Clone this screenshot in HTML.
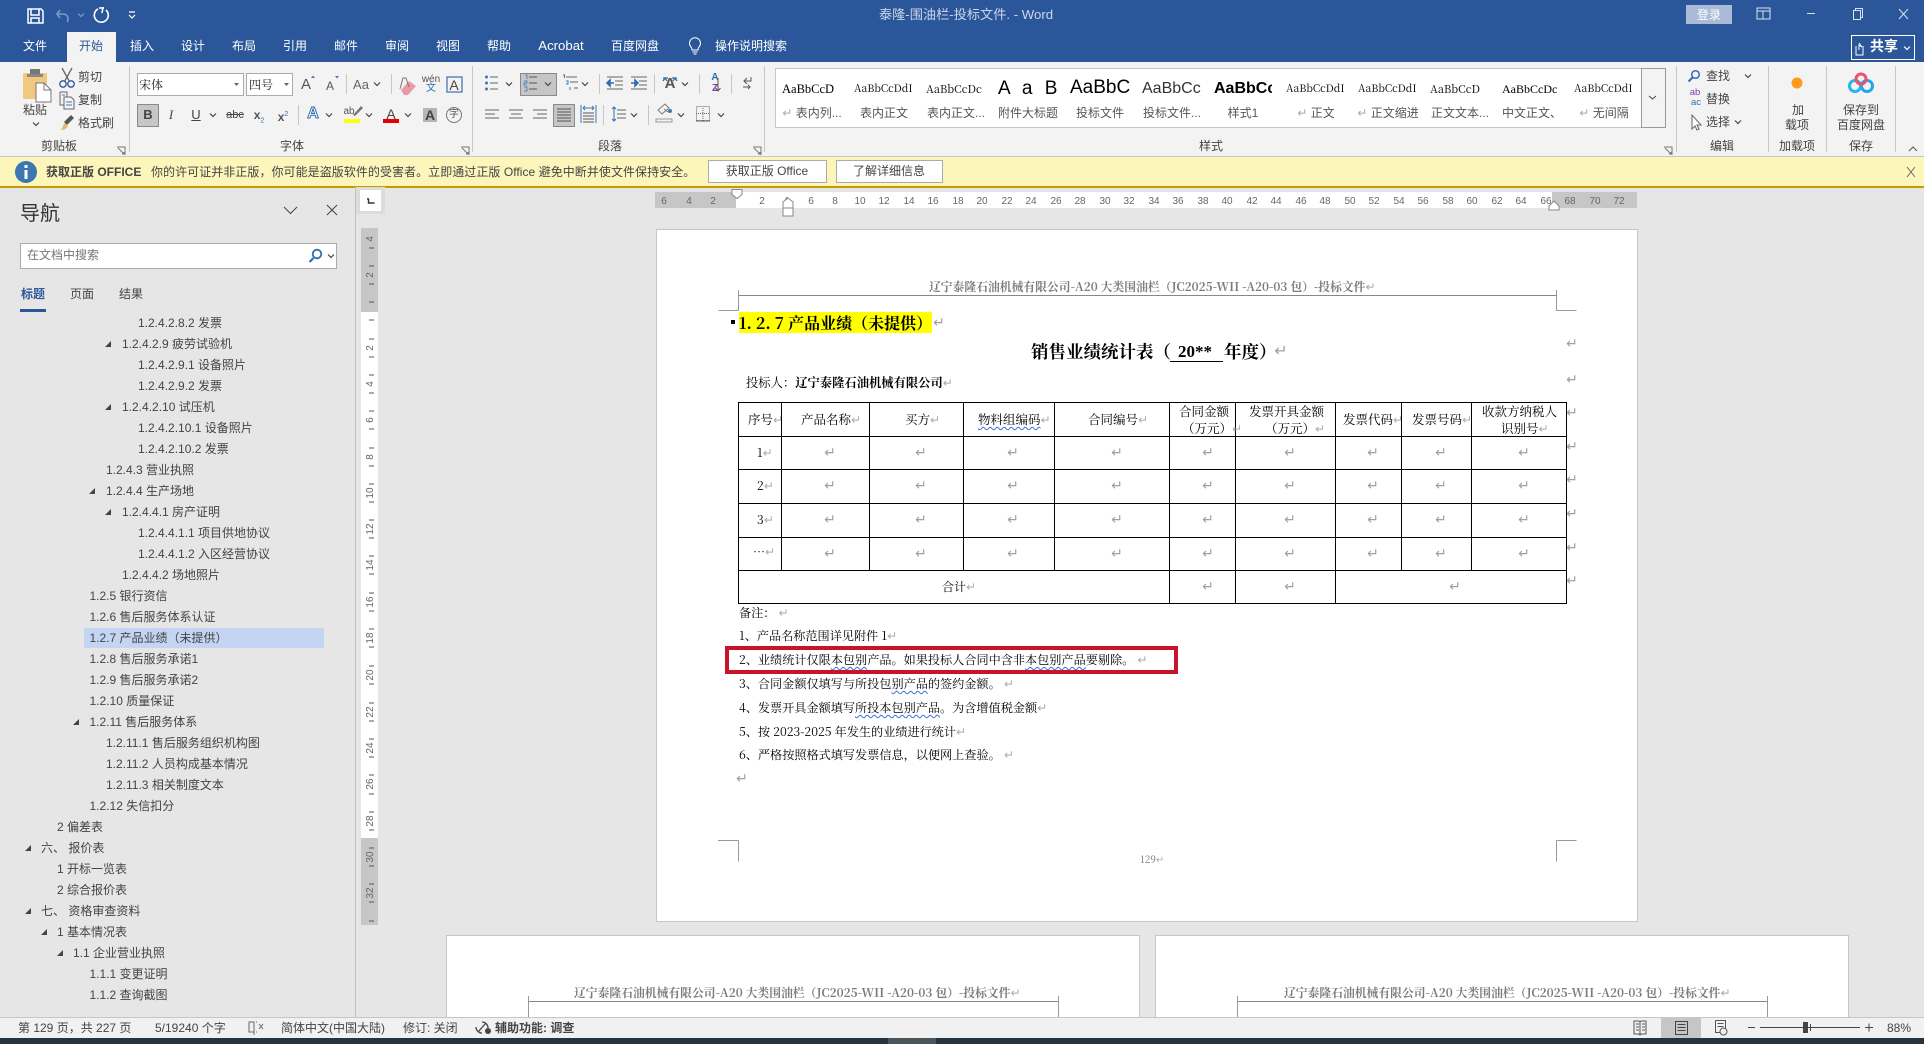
<!DOCTYPE html>
<html lang="zh-CN"><head><meta charset="utf-8"><title>Word</title>
<style>
html,body{margin:0;padding:0;width:1924px;height:1044px;overflow:hidden;background:#E6E6E6}
body{position:relative;font-family:"Liberation Sans","Noto Sans CJK SC",sans-serif;font-size:12px;color:#444}
.b{position:absolute}
.t{position:absolute;white-space:nowrap;line-height:16px;height:16px}
.c{transform:translateX(-50%)}
.w{color:#fff}
.d{font-family:"Noto Serif CJK SC","Liberation Serif",serif;color:#000}
.h{font-family:"Noto Serif CJK SC","Liberation Serif",serif;color:#7b7b7b;font-weight:700}
.r{font-family:"DejaVu Sans",sans-serif;font-weight:400;color:#aaa;font-size:12px;font-style:normal}
.m{position:absolute;line-height:16px;height:16px;font-family:"DejaVu Sans",sans-serif;color:#a0a0a0;font-size:14px;transform:translateX(-50%)}
.u{text-decoration:underline wavy #3a6fd8 1px;text-underline-offset:2px}
.n{position:absolute;white-space:nowrap;line-height:16px;height:16px;color:#444}
.s{position:absolute;overflow:hidden;white-space:nowrap;color:#000;text-align:left}
.g{position:absolute;white-space:nowrap;line-height:16px;height:16px;color:#555;transform:translateX(-50%)}
svg text{font-family:"Liberation Sans",sans-serif}
</style></head>
<body>
<!-- backgrounds -->
<div class="b" style="left:0;top:0;width:1924px;height:62px;background:#2B579A"></div>
<div class="b" style="left:67px;top:32px;width:49px;height:30px;background:#F3F3F3"></div>
<div class="b" style="left:0;top:62px;width:1924px;height:94px;background:#F3F3F3"></div>
<div class="b" style="left:0;top:156px;width:1924px;height:1px;background:#C6C6C6"></div>
<div class="b" style="left:0;top:157px;width:1924px;height:29px;background:#FDF6BA;border-bottom:2px solid #C79A00"></div>
<div class="b" style="left:1686px;top:5px;width:46px;height:19px;background:#A9BBD6"></div>
<div class="b" style="left:1851px;top:35px;width:62px;height:23px;border:1px solid #fff"></div>
<div class="b" style="left:137px;top:73px;width:105px;height:21px;background:#fff;border:1px solid #ABABAB"></div>
<div class="b" style="left:246px;top:73px;width:45px;height:21px;background:#fff;border:1px solid #ABABAB"></div>
<div class="b" style="left:137px;top:104px;width:20px;height:21px;background:#C6C6C6;border:1px solid #8a8a8a"></div>
<div class="b" style="left:520px;top:73px;width:35px;height:21px;background:#C6C6C6;border:1px solid #8a8a8a"></div>
<div class="b" style="left:553px;top:104px;width:20px;height:21px;background:#C6C6C6;border:1px solid #8a8a8a"></div>
<div class="b" style="left:775px;top:68px;width:866px;height:58px;background:#fff;border:1px solid #C6C6C6;border-right:0"></div>
<div class="b" style="left:1641px;top:68px;width:23px;height:58px;background:#F3F3F3;border:1px solid #9a9a9a"></div>
<div class="b" style="left:708px;top:160px;width:117px;height:21px;background:#fff;border:1px solid #ABABAB"></div>
<div class="b" style="left:836px;top:160px;width:105px;height:21px;background:#fff;border:1px solid #ABABAB"></div>
<div class="b" style="left:355px;top:187px;width:1px;height:830px;background:#BFBFBF"></div>
<div class="b" style="left:356px;top:187px;width:29px;height:27px;background:#DCDCDC"></div>
<div class="b" style="left:360px;top:190px;width:21px;height:21px;background:#fff"></div>
<div class="b" style="left:361px;top:228px;width:17px;height:84px;background:#C6C6C6"></div>
<div class="b" style="left:361px;top:312px;width:17px;height:526px;background:#fff"></div>
<div class="b" style="left:361px;top:838px;width:17px;height:87px;background:#C6C6C6"></div>
<div class="b" style="left:655px;top:192px;width:81px;height:16px;background:#C6C6C6"></div>
<div class="b" style="left:736px;top:192px;width:816px;height:16px;background:#fff"></div>
<div class="b" style="left:1552px;top:192px;width:85px;height:16px;background:#C6C6C6"></div>
<div class="b" style="left:656px;top:229px;width:982px;height:693px;background:#fff;border:1px solid #C6C6C6;box-sizing:border-box"></div>
<div class="b" style="left:446px;top:935px;width:694px;height:90px;background:#fff;border:1px solid #C6C6C6;box-sizing:border-box"></div>
<div class="b" style="left:1155px;top:935px;width:694px;height:90px;background:#fff;border:1px solid #C6C6C6;box-sizing:border-box"></div>
<div class="b" style="left:20px;top:243px;width:315px;height:24px;background:#fff;border:1px solid #ABABAB"></div>
<div class="b" style="left:20px;top:309px;width:26px;height:3px;background:#2B579A"></div>
<div class="b" style="left:84px;top:628px;width:240px;height:20px;background:#C3D5F2"></div>
<div class="b" style="left:0;top:1017px;width:1924px;height:21px;background:#F1F1F1;border-top:1px solid #C6C6C6;box-sizing:border-box"></div>
<div class="b" style="left:1661px;top:1017px;width:40px;height:21px;background:#C6C6C6"></div>
<div class="b" style="left:0;top:1038px;width:1924px;height:6px;background:#25343E"></div>
<div class="b" style="left:888px;top:1038px;width:48px;height:6px;background:#4A555C"></div>
<div class="b" style="left:739px;top:312px;width:193px;height:21px;background:#FFFF00"></div>

<!-- graphics -->
<svg class="b" style="left:0;top:0" width="1924" height="1044" viewBox="0 0 1924 1044" fill="none">
<defs>
<path id="cv" d="M-3-1.5L0 1.5L3-1.5" stroke="#444" stroke-width="1.2"/>
<path id="ar" d="M6-3V3H0Z" fill="#444"/>
<path id="aln" d="M0 0h14M0 4h10M0 8h14" stroke="#666" stroke-width="1"/>
</defs>
<!-- QAT -->
<path d="M28 9h13l2 2v12H28zM31 9v6h8V9M31 23v-5h8v5" stroke="#fff" stroke-width="1.5"/>
<path d="M60 10l-3 4 3 4M57 14h7a5 5 0 0 1 3 8" stroke="#7D9AC6" stroke-width="1.6"/>
<path d="M78 13.500l3 3 3-3" stroke="#7D9AC6" stroke-width="1.2"/>
<path d="M98 9a7 7 0 1 0 8 1M103 7l-1 6M99 8h5" stroke="#fff" stroke-width="1.6"/>
<path d="M129 12h6M129 15l3 3 3-3" stroke="#fff" stroke-width="1.2"/>
<!-- window -->
<path d="M1757 8h13v11h-13zM1757 11h13M1763 11v8" stroke="#D8E1EE" stroke-width="1"/>
<path d="M1807 13.500h8" stroke="#D8E1EE"/>
<path d="M1853.500 10.500h7v9h-7zM1855.500 10.500v-2h7v9h-2" stroke="#D8E1EE"/>
<path d="M1899 9l9 10M1908 9l-9 10" stroke="#D8E1EE"/>
<!-- lightbulb -->
<path d="M691 47a5.500 5.500 0 1 1 8 0c-1 1-1 2-1 3h-6c0-1 0-2-1-3zM692.500 52h5M693.500 54h3" stroke="#fff" stroke-width="1"/>
<!-- share -->
<path d="M1856 46v9h7v-9M1859 50v-5l3 2-3-4" stroke="#fff"/>
<path d="M1904 46.500l3 3 3-3" stroke="#fff" stroke-width="1.2"/>
<!-- separators -->
<path d="M129.500 66v86M472.500 66v86M764.500 66v86M1676.500 66v86M1768.500 66v86M1826.500 66v86M1895.500 66v86" stroke="#C6C6C6"/>
<path d="M346.500 74v20M391.500 74v20M298.500 105v20M599.500 74v20M654.500 74v20M699.500 74v20M731.500 74v20M603.500 105v20M648.500 105v20" stroke="#C6C6C6"/>
<!-- dialog launchers -->
<path d="M117 147h8v8M118 148l6 6M122 154h2v-2" stroke="#777"/>
<path d="M461 147h8v8M462 148l6 6M466 154h2v-2" stroke="#777"/>
<path d="M753 147h8v8M754 148l6 6M758 154h2v-2" stroke="#777"/>
<path d="M1664 147h8v8M1665 148l6 6M1669 154h2v-2" stroke="#777"/>
<path d="M1909 151l4-4 4 4" stroke="#555"/>
<!-- paste -->
<rect x="23" y="73" width="24" height="26" rx="1" fill="#F0C87E"/>
<rect x="30" y="69" width="10" height="7" fill="#777"/><rect x="27" y="74" width="16" height="3" fill="#888"/>
<path d="M36 83h8l7 7v12H36z" fill="#fff" stroke="#777"/><path d="M44 83v7h7" stroke="#777"/>
<use href="#cv" x="36" y="124"/>
<!-- scissors -->
<circle cx="63" cy="84" r="3.200" stroke="#2B579A" stroke-width="1.300"/><circle cx="71" cy="84" r="3.200" stroke="#2B579A" stroke-width="1.300"/>
<path d="M64.500 81.500L72 68M69.500 81.500L62 68" stroke="#666" stroke-width="1.300"/>
<!-- copy -->
<path d="M60 92h7v5M60 92v13h4M64 97h7l3 3v9h-10z" stroke="#667" stroke-width="1"/><path d="M66 102h6M66 105h6M62 95h3" stroke="#4A78B5"/>
<!-- painter -->
<path d="M64 122l7-7 3 3-7 7z" fill="#555"/><path d="M60 130c3-1 3-6 5-7l3 3c-1 3-5 4-8 4z" fill="#E8B86A"/>
<path d="M234 83l2.500 3 2.500-3zM284 83l2.500 3 2.500-3z" fill="#666"/>
<!-- font shrink/grow arrows -->
<path d="M311 78l2-2.500 2 2.500zM335 76l2 2.500 2-2.500z" fill="#4A78B5"/>
<use href="#cv" x="377" y="84"/>
<!-- eraser -->
<path d="M401 90l8-9 7 5-8 9h-4z" fill="#E99AA6"/><path d="M400 89l3-11h3l3 9" stroke="#777"/>
<rect x="447" y="77" width="15" height="15" stroke="#4A78B5" stroke-width="1.300"/>
<!-- font row 2 -->
<use href="#cv" x="213" y="115"/><use href="#cv" x="329" y="115"/><use href="#cv" x="369" y="115"/><use href="#cv" x="408" y="115"/>
<rect x="344" y="119" width="16" height="4" fill="#FFFF00"/><rect x="383" y="119" width="16" height="4" fill="#E60000"/>
<path d="M353 115l8-9 2 2-8 8z" fill="#777"/>
<rect x="423" y="108" width="14" height="14" fill="#B5B5B5"/>
<circle cx="454" cy="115" r="7.500" stroke="#777"/>
<!-- bullets -->
<g fill="#3C78B5"><circle cx="486.500" cy="77" r="1.500"/><circle cx="486.500" cy="83" r="1.500"/><circle cx="486.500" cy="89" r="1.500"/></g>
<path d="M490 77h8M490 83h8M490 89h8" stroke="#666"/><use href="#cv" x="509" y="84"/>
<path d="M529 77h8M529 83h8M529 89h8" stroke="#555"/><use href="#cv" x="548" y="84"/>
<path d="M525 75h2v4M524 81h3v2h-3v2h3M524 87h3v4h-3" stroke="#3C78B5" stroke-width=".8"/>
<path d="M563 75h1.500v3M566 77h11M570 82h8M574 88h4" stroke="#666"/><path d="M566 81h2v3h-2M570 87v3" stroke="#3C78B5"/><use href="#cv" x="585" y="84"/>
<!-- indent -->
<path d="M607 77h16M615 81h8M615 85h8M607 89h16M631 77h16M639 81h8M639 85h8M631 89h16" stroke="#666"/>
<path d="M614 83h-7M607 83l3-3v6zM631 83h7M638 83l-3-3v6z" stroke="#2F6FB0" stroke-width="1.600" fill="#2F6FB0"/>
<!-- text direction -->
<path d="M663 81l2-3 2 3M663 78h5M677 81l-2-3-2 3M677 78h-5" stroke="#2F6FB0" stroke-width="1.300"/>
<use href="#cv" x="685" y="84"/>
<path d="M718 78v13M715.500 88l2.500 3 2.500-3" stroke="#555"/>
<path d="M751 77v4h-7M747 78l-3 3 3 3M743 87h7M748 85l2 2-2 2" stroke="#555"/>
<!-- align -->
<use href="#aln" x="485" y="110"/><path d="M509 110h14M511 114h10M509 118h14M533 110h14M537 114h10M533 118h14" stroke="#666"/>
<path d="M557 109h14M557 112h14M557 115h14M557 118h14M557 121h14" stroke="#555"/>
<path d="M581 105v18M596 105v18" stroke="#3C78B5"/><path d="M583 108h11M583 108l2-2M583 108l2 2M594 108l-2-2M594 108l-2 2" stroke="#3C78B5"/><path d="M583 113h11M583 116h11M583 119h11M583 122h11" stroke="#555"/>
<path d="M617 110h9M617 114h9M617 118h9" stroke="#666"/><path d="M614 107v14M612 109l2-2 2 2M612 119l2 2 2-2" stroke="#2F6FB0"/>
<use href="#cv" x="634" y="115"/>
<path d="M658 110l7-6 4 4-7 6zM664 109l4 3" stroke="#777"/><rect x="656" y="119" width="16" height="3" stroke="#999"/><circle cx="670" cy="111" r="2" fill="#3C78B5"/>
<use href="#cv" x="681" y="115"/>
<path d="M696.500 106.500h13v14h-13zM703 106v15M696 113.500h14" stroke="#666" stroke-dasharray="1 1"/><path d="M696 121h14" stroke="#666"/>
<use href="#cv" x="721" y="115"/>
<path d="M1649 96l3.500 3 3.500-3" stroke="#444"/>
<!-- edit -->
<circle cx="1695.500" cy="74.500" r="3.800" stroke="#2F6FB0" stroke-width="1.500"/><path d="M1692.500 77.500l-4 4" stroke="#2F6FB0" stroke-width="2"/>
<use href="#cv" x="1748" y="76"/><use href="#cv" x="1738" y="122"/>
<path d="M1692 115v14l3-3 2 4 2-1-2-4h4z" stroke="#666" fill="#fff"/>
<circle cx="1797" cy="83" r="5.500" fill="#FF9A1F"/>
<!-- baidu -->
<circle cx="1855" cy="86" r="5.500" stroke="#23B7EA" stroke-width="3"/>
<circle cx="1867" cy="86" r="5.500" stroke="#23A7E8" stroke-width="3"/>
<circle cx="1861" cy="79" r="5" stroke="#F0506E" stroke-width="3"/>
<!-- info -->
<circle cx="26" cy="172" r="11" fill="#3C78AF"/><rect x="24.500" y="170" width="3" height="9" fill="#fff"/><rect x="24.500" y="165" width="3" height="3" fill="#fff"/>
<path d="M1907 167l8 10M1915 167l-8 10" stroke="#666"/>
<!-- nav -->
<path d="M284 207l6.500 6.500 6.500-6.500M327 205l10 10M337 205l-10 10" stroke="#444"/>
<circle cx="317" cy="254" r="4.300" stroke="#2F6FB0" stroke-width="1.800"/><path d="M313.500 258l-4 4" stroke="#2F6FB0" stroke-width="2.200"/><use href="#cv" x="331" y="256"/>
<use href="#ar" x="105" y="344"/><use href="#ar" x="105" y="407"/><use href="#ar" x="89" y="491"/><use href="#ar" x="105" y="512"/><use href="#ar" x="73" y="722"/><use href="#ar" x="25" y="848"/><use href="#ar" x="25" y="911"/><use href="#ar" x="41" y="932"/><use href="#ar" x="57" y="953"/>
<!-- v ruler -->
<path d="M367 199h1.500v4h6" stroke="#333" stroke-width="1.400"/>
<path d="M369 248h5M369 266h5M369 284h5M369 302h5M369 320h5M369 339h5M369 357h5M369 375h5M369 393h5M369 411h5M369 429h5M369 448h5M369 466h5M369 484h5M369 502h5M369 520h5M369 538h5M369 556h5M369 574h5M369 593h5M369 611h5M369 629h5M369 647h5M369 666h5M369 684h5M369 703h5M369 721h5M369 739h5M369 757h5M369 775h5M369 794h5M369 812h5M369 830h5M369 848h5M369 866h5M369 884h5M369 902h5M369 921h5" stroke="#555"/>
<g fill="#666" font-size="10" text-anchor="middle">
<text transform="translate(373,239) rotate(-90)">4</text><text transform="translate(373,275) rotate(-90)">2</text><text transform="translate(373,348) rotate(-90)">2</text><text transform="translate(373,384) rotate(-90)">4</text><text transform="translate(373,420) rotate(-90)">6</text><text transform="translate(373,457) rotate(-90)">8</text><text transform="translate(373,493) rotate(-90)">10</text><text transform="translate(373,529) rotate(-90)">12</text><text transform="translate(373,565) rotate(-90)">14</text><text transform="translate(373,602) rotate(-90)">16</text><text transform="translate(373,638) rotate(-90)">18</text><text transform="translate(373,675) rotate(-90)">20</text><text transform="translate(373,712) rotate(-90)">22</text><text transform="translate(373,748) rotate(-90)">24</text><text transform="translate(373,784) rotate(-90)">26</text><text transform="translate(373,821) rotate(-90)">28</text><text transform="translate(373,857) rotate(-90)">30</text><text transform="translate(373,893) rotate(-90)">32</text>
<!-- h ruler -->
<text x="664" y="204">6</text><text x="689" y="204">4</text><text x="713" y="204">2</text><text x="762" y="204">2</text><text x="786" y="204">4</text><text x="811" y="204">6</text><text x="835" y="204">8</text><text x="860" y="204">10</text><text x="884" y="204">12</text><text x="909" y="204">14</text><text x="933" y="204">16</text><text x="958" y="204">18</text><text x="982" y="204">20</text><text x="1007" y="204">22</text><text x="1031" y="204">24</text><text x="1056" y="204">26</text><text x="1080" y="204">28</text><text x="1105" y="204">30</text><text x="1129" y="204">32</text><text x="1154" y="204">34</text><text x="1178" y="204">36</text><text x="1203" y="204">38</text><text x="1227" y="204">40</text><text x="1252" y="204">42</text><text x="1276" y="204">44</text><text x="1301" y="204">46</text><text x="1325" y="204">48</text><text x="1350" y="204">50</text><text x="1374" y="204">52</text><text x="1399" y="204">54</text><text x="1423" y="204">56</text><text x="1448" y="204">58</text><text x="1472" y="204">60</text><text x="1497" y="204">62</text><text x="1521" y="204">64</text><text x="1546" y="204">66</text><text x="1570" y="204">68</text><text x="1595" y="204">70</text><text x="1619" y="204">72</text>
</g>
<path d="M732 189.500h10v5l-5 4-5-4z" fill="#fff" stroke="#888"/>
<path d="M783 202l5-4 5 4v14h-10zM783 208h10" fill="#fff" stroke="#888"/>
<path d="M1549 210v-4l5-5 5 5v4z" fill="#fff" stroke="#888"/>
<!-- page crop marks & header lines -->
<path d="M738.500 290v20.500h-20M1556.500 290v20.500h20M738.500 840.500v21M718 840.500h20.500M1556.500 840.500v21M1556.500 840.500h20" stroke="#999"/>
<path d="M738 295.500h819M528 1001.500h531M1237 1001.500h531" stroke="#888"/>
<path d="M1058.500 996v21M1767.500 996v21M528.500 996v21M1237.500 996v21" stroke="#999"/>
<rect x="731" y="320" width="4" height="4" fill="#000"/>
<!-- table -->
<path d="M738.500 402.500H1566.500M738.500 436.500H1566.500M738.500 469.500H1566.500M738.500 503.500H1566.500M738.500 537.500H1566.500M738.500 570.500H1566.500M738.500 603.500H1566.500M738.500 402V604M1566.500 402V604M781.500 402V571M869.500 402V571M963.500 402V571M1054.500 402V571M1401.500 402V571M1471.500 402V571M1169.500 402V604M1235.500 402V604M1335.500 402V604" stroke="#000" stroke-width="1"/>
<path d="M1170 361.500h53" stroke="#000"/>
<!-- red box -->
<rect x="727" y="648" width="449" height="24" stroke="#C8142A" stroke-width="4"/>
<!-- status bar -->
<path d="M249 1022h5v10h-5zM254 1022v13M256 1022h1M256 1032h1M259 1024l4 5M263 1024l-4 5" stroke="#666"/>
<path d="M478 1032l8-9M482 1022a6 6 0 0 1 6 6M476 1027a6 6 0 0 0 6 6" stroke="#444" stroke-width="1.300"/><circle cx="488" cy="1031" r="3" fill="#444"/>
<path d="M1634 1021h5l1 1 1-1h5v13h-5l-1 1-1-1h-5zM1640 1022v12M1636 1024h3M1636 1027h3M1636 1030h3M1642 1024h3M1642 1027h3M1642 1030h3" stroke="#555"/>
<path d="M1675.500 1021.500h12v13h-12zM1677.500 1024.500h8M1677.500 1027.500h8M1677.500 1030.500h8" stroke="#444"/>
<path d="M1715.500 1020.500h10v8M1715.500 1020.500v12h5M1717.500 1023.500h6M1717.500 1026.500h6" stroke="#555"/><circle cx="1723.500" cy="1031.500" r="3.500" stroke="#555"/>
<path d="M1748 1027.500h7M1760 1027.500h100M1865 1027.500h8M1869 1023.500v8M1810.500 1024v7" stroke="#444"/>
<rect x="1803" y="1022" width="5" height="11" fill="#444"/>
</svg>

<!-- title bar -->
<div class="t c" style="left:966px;top:7px;font-size:13.200px;color:#CBD6E8">泰隆-围油栏-投标文件. - Word</div>
<div class="t c w" style="left:1709px;top:7px">登录</div>
<!-- tabs -->
<div class="t c w" style="left:35px;top:38px">文件</div>
<div class="t c" style="left:91px;top:38px;color:#2B579A">开始</div>
<div class="t c w" style="left:142px;top:38px">插入</div>
<div class="t c w" style="left:193px;top:38px">设计</div>
<div class="t c w" style="left:244px;top:38px">布局</div>
<div class="t c w" style="left:295px;top:38px">引用</div>
<div class="t c w" style="left:346px;top:38px">邮件</div>
<div class="t c w" style="left:397px;top:38px">审阅</div>
<div class="t c w" style="left:448px;top:38px">视图</div>
<div class="t c w" style="left:499px;top:38px">帮助</div>
<div class="t c w" style="left:561px;top:38px;font-size:13.200px">Acrobat</div>
<div class="t c w" style="left:635px;top:38px">百度网盘</div>
<div class="t c w" style="left:751px;top:38px">操作说明搜索</div>
<div class="t c w" style="left:1884px;top:38px;font-size:14px;font-weight:700">共享</div>

<!-- clipboard -->
<div class="t c" style="left:35px;top:102px">粘贴</div>
<div class="t" style="left:78px;top:69px">剪切</div>
<div class="t" style="left:78px;top:92px">复制</div>
<div class="t" style="left:78px;top:115px">格式刷</div>
<div class="t c" style="left:59px;top:138px">剪贴板</div>
<!-- font -->
<div class="t" style="left:139px;top:77px;color:#222;font-size:12px;font-family:'Noto Serif CJK SC',serif">宋体</div>
<div class="t" style="left:249px;top:77px;color:#222;font-size:12px;font-family:'Noto Serif CJK SC',serif">四号</div>
<div class="t c" style="left:306px;top:77px;font-size:15px;color:#555">A</div>
<div class="t c" style="left:330px;top:78px;font-size:12px;color:#555">A</div>
<div class="t c" style="left:361px;top:77px;font-size:13px;color:#666">Aa</div>
<div class="t c" style="left:431px;top:72px;font-size:10px;color:#555">wén</div>
<div class="t c" style="left:431px;top:81px;font-size:10px;color:#2F6FB0">文</div>
<div class="t c" style="left:454px;top:77px;font-size:14px;color:#444">A</div>
<div class="t c" style="left:148px;top:107px;font-size:13px;font-weight:700;color:#444">B</div>
<div class="t c" style="left:171px;top:107px;font-size:13px;font-style:italic;font-family:'Liberation Serif',serif;color:#444">I</div>
<div class="t c" style="left:196px;top:107px;font-size:13px;text-decoration:underline;color:#444">U</div>
<div class="t c" style="left:235px;top:107px;font-size:11px;text-decoration:line-through;color:#444">abc</div>
<div class="t c" style="left:259px;top:107px;font-size:12px;font-weight:700;color:#555">x<sub style="font-size:7px;color:#2F6FB0;font-weight:400">2</sub></div>
<div class="t c" style="left:283px;top:107px;font-size:12px;font-weight:700;color:#555">x<sup style="font-size:7px;color:#2F6FB0;font-weight:400">2</sup></div>
<div class="t c" style="left:313px;top:106px;font-size:16px;font-weight:700;color:#fff;-webkit-text-stroke:1px #2F6FB0">A</div>
<div class="t c" style="left:349px;top:104px;font-size:10px;color:#555">ab</div>
<div class="t c" style="left:391px;top:106px;font-size:14px;color:#444">A</div>
<div class="t c" style="left:430px;top:107px;font-size:14px;font-weight:700;color:#444">A</div>
<div class="t c" style="left:454px;top:107px;font-size:10px;color:#555">字</div>
<div class="t c" style="left:292px;top:138px">字体</div>
<div class="t c" style="left:610px;top:138px">段落</div>
<div class="t c" style="left:1211px;top:138px">样式</div>
<div class="t c" style="left:1722px;top:138px">编辑</div>
<div class="t c" style="left:1797px;top:138px">加载项</div>
<div class="t c" style="left:1861px;top:138px">保存</div>
<div class="t c" style="left:670px;top:76px;font-size:15px;font-weight:700;color:#555">A</div>
<div class="t c" style="left:715px;top:70px;font-size:10px;font-weight:700;color:#2F6FB0">A</div>
<div class="t c" style="left:715px;top:81px;font-size:10px;font-weight:700;color:#7B3FA5">Z</div>

<!-- styles -->
<div class="s" style="left:782px;top:80px;width:60px;font-size:12.500px;line-height:18px;font-family:'Liberation Serif',serif">AaBbCcD</div>
<div class="s" style="left:854px;top:80px;width:60px;font-size:10.500px;line-height:18px;font-family:'Noto Serif CJK SC',serif">AaBbCcDdI</div>
<div class="s" style="left:926px;top:80px;width:60px;font-size:11px;line-height:18px;font-family:'Noto Serif CJK SC',serif">AaBbCcDc</div>
<div class="s" style="left:998px;top:78px;width:60px;font-size:19px;line-height:22px;letter-spacing:3.500px">A a B</div>
<div class="s" style="left:1070px;top:76px;width:60px;font-size:19px;line-height:24px">AaBbC</div>
<div class="s" style="left:1142px;top:78px;width:60px;font-size:16px;line-height:22px;color:#333">AaBbCc</div>
<div class="s" style="left:1214px;top:78px;width:58px;font-size:16px;line-height:22px;font-weight:700">AaBbCc</div>
<div class="s" style="left:1286px;top:80px;width:60px;font-size:10.500px;line-height:18px;font-family:'Noto Serif CJK SC',serif">AaBbCcDdI</div>
<div class="s" style="left:1358px;top:80px;width:60px;font-size:10.500px;line-height:18px;font-family:'Noto Serif CJK SC',serif">AaBbCcDdI</div>
<div class="s" style="left:1430px;top:80px;width:60px;font-size:11px;line-height:18px;font-family:'Noto Serif CJK SC',serif">AaBbCcD</div>
<div class="s" style="left:1502px;top:80px;width:60px;font-size:12px;line-height:18px;font-family:'Liberation Serif',serif">AaBbCcDc</div>
<div class="s" style="left:1574px;top:80px;width:60px;font-size:10.500px;line-height:18px;font-family:'Noto Serif CJK SC',serif">AaBbCcDdI</div>
<div class="g" style="left:812px;top:105px"><i class="r">↵</i> 表内列...</div>
<div class="g" style="left:884px;top:105px">表内正文</div>
<div class="g" style="left:956px;top:105px">表内正文...</div>
<div class="g" style="left:1028px;top:105px">附件大标题</div>
<div class="g" style="left:1100px;top:105px">投标文件</div>
<div class="g" style="left:1172px;top:105px">投标文件...</div>
<div class="g" style="left:1243px;top:105px">样式1</div>
<div class="g" style="left:1316px;top:105px"><i class="r">↵</i> 正文</div>
<div class="g" style="left:1388px;top:105px"><i class="r">↵</i> 正文缩进</div>
<div class="g" style="left:1460px;top:105px">正文文本...</div>
<div class="g" style="left:1532px;top:105px">中文正文、</div>
<div class="g" style="left:1604px;top:105px"><i class="r">↵</i> 无间隔</div>
<!-- edit -->
<div class="t" style="left:1706px;top:68px">查找</div>
<div class="t" style="left:1706px;top:91px">替换</div>
<div class="t" style="left:1706px;top:114px">选择</div>
<div class="t c" style="left:1695px;top:87px;font-size:9.500px;color:#7B3FA5;line-height:12px">ab</div>
<div class="t c" style="left:1696px;top:97px;font-size:9.500px;color:#2F6FB0;line-height:12px">ac</div>
<div class="t c" style="left:1798px;top:102px">加</div>
<div class="t c" style="left:1797px;top:117px">载项</div>
<div class="t c" style="left:1861px;top:102px">保存到</div>
<div class="t c" style="left:1861px;top:117px">百度网盘</div>

<!-- message bar -->
<div class="t" style="left:46px;top:164px;font-weight:700;color:#444">获取正版 OFFICE</div>
<div class="t" style="left:151px;top:164px;letter-spacing:.05px;color:#444">你的许可证并非正版，你可能是盗版软件的受害者。立即通过正版 Office 避免中断并使文件保持安全。</div>
<div class="t c" style="left:767px;top:163px">获取正版 Office</div>
<div class="t c" style="left:889px;top:163px">了解详细信息</div>

<!-- nav -->
<div class="t" style="left:20px;top:202px;height:24px;line-height:24px;font-size:20px;color:#333">导航</div>
<div class="t" style="left:27px;top:247px;color:#777">在文档中搜索</div>
<div class="t" style="left:21px;top:286px;color:#2B579A;font-weight:700">标题</div>
<div class="t" style="left:70px;top:286px">页面</div>
<div class="t" style="left:119px;top:286px">结果</div>
<div class="n" style="left:138px;top:315px">1.2.4.2.8.2 发票</div>
<div class="n" style="left:122px;top:336px">1.2.4.2.9 疲劳试验机</div>
<div class="n" style="left:138px;top:357px">1.2.4.2.9.1 设备照片</div>
<div class="n" style="left:138px;top:378px">1.2.4.2.9.2 发票</div>
<div class="n" style="left:122px;top:399px">1.2.4.2.10 试压机</div>
<div class="n" style="left:138px;top:420px">1.2.4.2.10.1 设备照片</div>
<div class="n" style="left:138px;top:441px">1.2.4.2.10.2 发票</div>
<div class="n" style="left:106px;top:462px">1.2.4.3 营业执照</div>
<div class="n" style="left:106px;top:483px">1.2.4.4 生产场地</div>
<div class="n" style="left:122px;top:504px">1.2.4.4.1 房产证明</div>
<div class="n" style="left:138px;top:525px">1.2.4.4.1.1 项目供地协议</div>
<div class="n" style="left:138px;top:546px">1.2.4.4.1.2 入区经营协议</div>
<div class="n" style="left:122px;top:567px">1.2.4.4.2 场地照片</div>
<div class="n" style="left:89.500px;top:588px">1.2.5 银行资信</div>
<div class="n" style="left:89.500px;top:609px">1.2.6 售后服务体系认证</div>
<div class="n" style="left:89.500px;top:630px">1.2.7 产品业绩（未提供）</div>
<div class="n" style="left:89.500px;top:651px">1.2.8 售后服务承诺1</div>
<div class="n" style="left:89.500px;top:672px">1.2.9 售后服务承诺2</div>
<div class="n" style="left:89.500px;top:693px">1.2.10 质量保证</div>
<div class="n" style="left:89.500px;top:714px">1.2.11 售后服务体系</div>
<div class="n" style="left:106px;top:735px">1.2.11.1 售后服务组织机构图</div>
<div class="n" style="left:106px;top:756px">1.2.11.2 人员构成基本情况</div>
<div class="n" style="left:106px;top:777px">1.2.11.3 相关制度文本</div>
<div class="n" style="left:89.500px;top:798px">1.2.12 失信扣分</div>
<div class="n" style="left:57px;top:819px">2 偏差表</div>
<div class="n" style="left:41px;top:840px">六、 报价表</div>
<div class="n" style="left:57px;top:861px">1 开标一览表</div>
<div class="n" style="left:57px;top:882px">2 综合报价表</div>
<div class="n" style="left:41px;top:903px">七、 资格审查资料</div>
<div class="n" style="left:57px;top:924px">1 基本情况表</div>
<div class="n" style="left:73px;top:945px">1.1 企业营业执照</div>
<div class="n" style="left:89.500px;top:966px">1.1.1 变更证明</div>
<div class="n" style="left:89.500px;top:987px">1.1.2 查询截图</div>

<!-- document -->
<div class="t h" style="left:929px;top:279px;font-size:11.800px">辽宁泰隆石油机械有限公司-A20 大类围油栏（JC2025-WII -A20-03 包）-投标文件<i class="r">↵</i></div>
<div class="t d" style="left:739px;top:315px;font-size:16px;font-weight:700">1. 2. 7 产品业绩（未提供）</div>
<div class="m" style="left:939px;top:315px">↵</div>
<div class="t d" style="left:1031px;top:343px;height:18px;line-height:18px;font-size:17.500px;font-weight:700">销售业绩统计表（</div>
<div class="t d" style="left:1178px;top:343px;height:18px;line-height:18px;font-size:17px;font-weight:700;font-family:'Liberation Serif',serif">20**</div>
<div class="t d" style="left:1224px;top:343px;height:18px;line-height:18px;font-size:17.500px;font-weight:700">年度）</div>
<div class="m" style="left:1281px;top:343px;font-size:16px">↵</div>
<div class="t d" style="left:746px;top:374px;font-size:12.300px">投标人：<b>辽宁泰隆石油机械有限公司</b><i class="r">↵</i></div>

<div class="t d" style="left:748px;top:411px;font-size:12.500px">序号<i class="r">↵</i></div>
<div class="t d" style="left:801px;top:411px;font-size:12.500px">产品名称<i class="r">↵</i></div>
<div class="t d" style="left:905px;top:411px;font-size:12.500px">买方<i class="r">↵</i></div>
<div class="t d" style="left:978px;top:411px;font-size:12.500px"><span class="u">物料组编码</span><i class="r">↵</i></div>
<div class="t d" style="left:1088px;top:411px;font-size:12.500px">合同编号<i class="r">↵</i></div>
<div class="t d" style="left:1179px;top:403px;font-size:12.500px">合同金额</div>
<div class="t d" style="left:1182px;top:420px;font-size:12.500px">（万元）<i class="r">↵</i></div>
<div class="t d" style="left:1249px;top:403px;font-size:12.500px">发票开具金额</div>
<div class="t d" style="left:1265px;top:420px;font-size:12.500px">（万元）<i class="r">↵</i></div>
<div class="t d" style="left:1343px;top:411px;font-size:12.500px">发票代码<i class="r">↵</i></div>
<div class="t d" style="left:1412px;top:411px;font-size:12.500px">发票号码<i class="r">↵</i></div>
<div class="t d" style="left:1482px;top:403px;font-size:12.500px">收款方纳税人</div>
<div class="t d" style="left:1501px;top:420px;font-size:12.500px">识别号<i class="r">↵</i></div>

<div class="t d" style="left:757px;top:445px">1<i class="r">↵</i></div>
<div class="t d" style="left:757px;top:478px">2<i class="r">↵</i></div>
<div class="t d" style="left:757px;top:512px">3<i class="r">↵</i></div>
<div class="t d" style="left:753px;top:544px">…<i class="r">↵</i></div>
<div class="t d" style="left:942px;top:579px">合计<i class="r">↵</i></div>

<div class="m" style="left:830px;top:445px">↵</div><div class="m" style="left:921px;top:445px">↵</div><div class="m" style="left:1013px;top:445px">↵</div><div class="m" style="left:1117px;top:445px">↵</div><div class="m" style="left:1208px;top:445px">↵</div><div class="m" style="left:1290px;top:445px">↵</div><div class="m" style="left:1373px;top:445px">↵</div><div class="m" style="left:1441px;top:445px">↵</div><div class="m" style="left:1524px;top:445px">↵</div>
<div class="m" style="left:830px;top:478px">↵</div><div class="m" style="left:921px;top:478px">↵</div><div class="m" style="left:1013px;top:478px">↵</div><div class="m" style="left:1117px;top:478px">↵</div><div class="m" style="left:1208px;top:478px">↵</div><div class="m" style="left:1290px;top:478px">↵</div><div class="m" style="left:1373px;top:478px">↵</div><div class="m" style="left:1441px;top:478px">↵</div><div class="m" style="left:1524px;top:478px">↵</div>
<div class="m" style="left:830px;top:512px">↵</div><div class="m" style="left:921px;top:512px">↵</div><div class="m" style="left:1013px;top:512px">↵</div><div class="m" style="left:1117px;top:512px">↵</div><div class="m" style="left:1208px;top:512px">↵</div><div class="m" style="left:1290px;top:512px">↵</div><div class="m" style="left:1373px;top:512px">↵</div><div class="m" style="left:1441px;top:512px">↵</div><div class="m" style="left:1524px;top:512px">↵</div>
<div class="m" style="left:830px;top:546px">↵</div><div class="m" style="left:921px;top:546px">↵</div><div class="m" style="left:1013px;top:546px">↵</div><div class="m" style="left:1117px;top:546px">↵</div><div class="m" style="left:1208px;top:546px">↵</div><div class="m" style="left:1290px;top:546px">↵</div><div class="m" style="left:1373px;top:546px">↵</div><div class="m" style="left:1441px;top:546px">↵</div><div class="m" style="left:1524px;top:546px">↵</div>
<div class="m" style="left:1208px;top:579px">↵</div><div class="m" style="left:1290px;top:579px">↵</div><div class="m" style="left:1455px;top:579px">↵</div>
<div class="m" style="left:1572px;top:336px">↵</div><div class="m" style="left:1572px;top:372px">↵</div><div class="m" style="left:1572px;top:405px">↵</div><div class="m" style="left:1572px;top:439px">↵</div><div class="m" style="left:1572px;top:472px">↵</div><div class="m" style="left:1572px;top:506px">↵</div><div class="m" style="left:1572px;top:540px">↵</div><div class="m" style="left:1572px;top:573px">↵</div>

<div class="t d" style="left:739px;top:605px;font-size:12.150px">备注： <i class="r">↵</i></div>
<div class="t d" style="left:739px;top:628px;font-size:12.150px">1、产品名称范围详见附件 1<i class="r">↵</i></div>
<div class="t d" style="left:739px;top:652px;font-size:12.150px">2、业绩统计仅限<span class="u">本包别</span>产品。如果投标人合同中含非<span class="u">本包别产品</span>要剔除。 <i class="r">↵</i></div>
<div class="t d" style="left:739px;top:676px;font-size:12.150px">3、合同金额仅填写与所投包<span class="u">别产品</span>的签约金额。 <i class="r">↵</i></div>
<div class="t d" style="left:739px;top:700px;font-size:12.150px">4、发票开具金额填写<span class="u">所投本包别产品</span>。为含增值税金额<i class="r">↵</i></div>
<div class="t d" style="left:739px;top:724px;font-size:12.150px">5、按 2023-2025 年发生的业绩进行统计<i class="r">↵</i></div>
<div class="t d" style="left:739px;top:747px;font-size:12.150px">6、严格按照格式填写发票信息，以便网上查验。 <i class="r">↵</i></div>
<div class="m" style="left:742px;top:771px">↵</div>
<div class="t h" style="left:1140px;top:851px;font-size:10px;font-weight:400">129<i class="r" style="font-size:10px">↵</i></div>
<div class="t h" style="left:574px;top:985px;font-size:11.800px">辽宁泰隆石油机械有限公司-A20 大类围油栏（JC2025-WII -A20-03 包）-投标文件<i class="r">↵</i></div>
<div class="t h" style="left:1284px;top:985px;font-size:11.800px">辽宁泰隆石油机械有限公司-A20 大类围油栏（JC2025-WII -A20-03 包）-投标文件<i class="r">↵</i></div>

<!-- status -->
<div class="t" style="left:18px;top:1020px">第 129 页，共 227 页</div>
<div class="t" style="left:155px;top:1020px">5/19240 个字</div>
<div class="t" style="left:281px;top:1020px">简体中文(中国大陆)</div>
<div class="t" style="left:403px;top:1020px">修订: 关闭</div>
<div class="t" style="left:495px;top:1020px;font-weight:700">辅助功能: 调查</div>
<div class="t c" style="left:1899px;top:1020px">88%</div>
</body></html>
